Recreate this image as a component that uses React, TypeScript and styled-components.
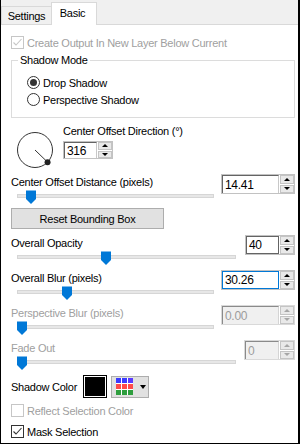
import React from 'react';
import styled, { createGlobalStyle, css } from 'styled-components';

const GlobalStyle = createGlobalStyle`
  html, body {
    margin: 0;
    padding: 0;
    background: #fff;
  }
  * {
    box-sizing: border-box;
  }
`;

type Variant = 'sunken' | 'hover' | 'focus' | 'disabled';

const Frame = styled.div`
  width: 300px;
  height: 444px;
  border-left: 1px solid #000;
  border-right: 2px solid #000;
  border-bottom: 1px solid #000;
  background: #fff;
  display: flex;
  flex-direction: column;
  font-family: 'Liberation Sans', Arial, sans-serif;
  font-size: 11px;
  letter-spacing: -0.25px;
  color: #000;
  overflow: hidden;
`;

const TabStrip = styled.div`
  height: 25px;
  flex: none;
  background: #f0f0f0;
  border-bottom: 1px solid #d9d9d9;
  display: flex;
  align-items: flex-end;
`;

const Tab = styled.div<{ $active?: boolean }>`
  display: flex;
  align-items: center;
  justify-content: center;
  border: 1px solid #d9d9d9;
  border-bottom: none;
  ${(p) =>
    p.$active
      ? css`
          width: 46px;
          height: 23px;
          margin: 0 0 -1px -1px;
          padding: 0 3px 2px 0;
          background: #fff;
          position: relative;
          z-index: 1;
        `
      : css`
          width: 51px;
          height: 18px;
          background: #f0f0f0;
        `}
`;

const Panel = styled.div`
  flex: 1;
  display: flex;
  flex-direction: column;
  padding: 0 3px 0 10px;
`;

const CheckRow = styled.div<{ $disabled?: boolean; $mt: number }>`
  display: flex;
  align-items: center;
  gap: 3px;
  height: 13px;
  margin-top: ${(p) => p.$mt}px;
  color: ${(p) => (p.$disabled ? '#a0a0a0' : '#000')};
`;

const CheckBox = styled.span<{ $disabled?: boolean }>`
  width: 13px;
  height: 13px;
  flex: none;
  display: flex;
  align-items: center;
  justify-content: center;
  background: #fff;
  border: 1px solid ${(p) => (p.$disabled ? '#c6c6c6' : '#333')};
`;

const GroupBox = styled.div`
  margin-top: 11px;
  border: 1px solid #dcdcdc;
  padding: 0 0 9px 15px;
  display: flex;
  flex-direction: column;
`;

const GroupTitle = styled.div`
  width: fit-content;
  margin: -8px 0 7px -9px;
  padding: 0 2px;
  line-height: 14px;
  background: #fff;
`;

const RadioRow = styled.div`
  display: flex;
  align-items: center;
  gap: 3px;
  height: 17px;
`;

const RadioCircle = styled.span<{ $checked?: boolean }>`
  width: 13px;
  height: 13px;
  flex: none;
  border: 1px solid #333;
  border-radius: 50%;
  display: flex;
  align-items: center;
  justify-content: center;
  &::after {
    content: '';
    width: 7px;
    height: 7px;
    border-radius: 50%;
    background: ${(p) => (p.$checked ? '#333' : 'transparent')};
  }
`;

const DialSection = styled.div`
  display: flex;
  align-items: flex-start;
  margin-top: 6px;
  height: 45px;
`;

const Dial = styled.svg`
  flex: none;
  margin: 7px 9px 0 5px;
`;

const DialColumn = styled.div`
  display: flex;
  flex-direction: column;
  gap: 3px;
`;

const Label = styled.div<{ $disabled?: boolean }>`
  line-height: 14px;
  white-space: nowrap;
  color: ${(p) => (p.$disabled ? '#a0a0a0' : '#000')};
`;

const Field = styled.div<{ $mt: number }>`
  display: flex;
  flex-direction: column;
  margin-top: ${(p) => p.$mt}px;
`;

const FieldTop = styled.div`
  display: flex;
  align-items: flex-start;
  justify-content: space-between;
  height: 20px;
  ${Label} {
    margin-top: 1px;
  }
`;

const SpinWrap = styled.div<{ $w: number; $h: number; $disabled?: boolean }>`
  display: flex;
  flex: none;
  width: ${(p) => p.$w}px;
  height: ${(p) => p.$h}px;
  border: 1px solid ${(p) => (p.$disabled ? '#d9d9d9' : '#c2c2c2')};
`;

const SpinInput = styled.div<{ $variant: Variant }>`
  flex: 1;
  display: flex;
  align-items: center;
  padding-left: 2px;
  font-size: 12px;
  letter-spacing: -0.3px;
  background: #fff;
  ${(p) => {
    switch (p.$variant) {
      case 'hover':
        return css`
          border: 1px solid #646464;
        `;
      case 'focus':
        return css`
          border: 1px solid #0078d7;
        `;
      case 'disabled':
        return css`
          background: #f0f0f0;
          color: #9c9c9c;
          border-top: 1px solid #8a8a8a;
          border-left: 1px solid #8a8a8a;
          border-right: 1px solid #d4d4d4;
        `;
      default:
        return css`
          border-top: 1px solid #646464;
          border-left: 1px solid #646464;
          border-right: 1px solid #c8c8c8;
        `;
    }
  }}
`;

const Spinner = styled.div`
  width: 15px;
  flex: none;
  display: flex;
  flex-direction: column;
  gap: 1px;
  padding: 0 0 0 1px;
  background: #fff;
`;

const SpinHalf = styled.div<{ $down?: boolean; $disabled?: boolean }>`
  flex: 1;
  display: flex;
  align-items: center;
  justify-content: center;
  background: #e9e9e9;
  border: 1px solid #c4c4c4;
  &::after {
    content: '';
    border-left: 3px solid transparent;
    border-right: 3px solid transparent;
    ${(p) =>
      p.$down
        ? css`
            border-top: 3px solid ${p.$disabled ? '#a6a6a6' : '#000'};
          `
        : css`
            border-bottom: 3px solid ${p.$disabled ? '#a6a6a6' : '#000'};
          `}
  }
`;

const SliderBox = styled.div<{ $right: number }>`
  position: relative;
  height: 14px;
  margin: -4px ${(p) => p.$right}px 0 0;
`;

const Track = styled.div`
  margin: 4px 0 0 6px;
  height: 4px;
  background: #e7e7e7;
  border: 1px solid #d6d6d6;
`;

const Thumb = styled.svg<{ $x: number }>`
  position: absolute;
  top: 0;
  left: ${(p) => p.$x}px;
`;

const PushButton = styled.div`
  margin-top: 4px;
  width: 153px;
  height: 21px;
  display: flex;
  align-items: center;
  justify-content: center;
  background: #e1e1e1;
  border: 1px solid #adadad;
`;

const ColorRow = styled.div`
  display: flex;
  align-items: center;
  height: 23px;
  margin-top: 5px;
`;

const Swatch = styled.div<{ $color: string }>`
  width: 24px;
  height: 23px;
  margin-left: 6px;
  background: ${(p) => p.$color};
  border: 1px solid #000;
  box-shadow: inset 0 0 0 1px #fff;
`;

const PaletteButton = styled.div`
  width: 38px;
  height: 22px;
  margin-left: 4px;
  display: flex;
  align-items: center;
  gap: 7px;
  padding-left: 4px;
  background: #e1e1e1;
  border: 1px solid #adadad;
`;

const Caret = styled.span`
  border-left: 3.5px solid transparent;
  border-right: 3.5px solid transparent;
  border-top: 4px solid #000;
`;

const Check = ({ disabled }: { disabled?: boolean }) => (
  <svg width="11" height="11" viewBox="0 0 11 11">
    <polyline
      points="1.5,5.5 4,8 9.5,2"
      fill="none"
      stroke={disabled ? '#c6c6c6' : '#333'}
      strokeWidth="1.1"
    />
  </svg>
);

const Spin: React.FC<{ value: string; w: number; h?: number; variant: Variant }> = ({
  value,
  w,
  h = 20,
  variant,
}) => {
  const off = variant === 'disabled';
  return (
    <SpinWrap $w={w} $h={h} $disabled={off}>
      <SpinInput $variant={variant}>{value}</SpinInput>
      <Spinner>
        <SpinHalf $disabled={off} />
        <SpinHalf $down $disabled={off} />
      </Spinner>
    </SpinWrap>
  );
};

const SliderField: React.FC<{
  label: string;
  value: string;
  spinW: number;
  variant: Variant;
  right: number;
  thumb: number;
  mt: number;
}> = ({ label, value, spinW, variant, right, thumb, mt }) => (
  <Field $mt={mt}>
    <FieldTop>
      <Label $disabled={variant === 'disabled'}>{label}</Label>
      <Spin value={value} w={spinW} variant={variant} />
    </FieldTop>
    <SliderBox $right={right}>
      <Track />
      <Thumb $x={thumb} width="10" height="14" viewBox="0 0 10 14">
        <polygon points="0,0.5 10,0.5 10,9 5,14 0,9" fill="#0078d7" />
      </Thumb>
    </SliderBox>
  </Field>
);

const paletteColors = [
  ['#3a3aff', '#3a3aff', '#5a3aff'],
  ['#ff4a4a', '#ff4a4a', '#ff4a4a'],
  ['#2e9e3e', '#2e9e3e', '#2e9e3e'],
];

const App: React.FC = () => {
  // 316 degrees, measured counter-clockwise from the right
  const angle = (316 * Math.PI) / 180;
  const kx = 19 + 18 * Math.cos(angle) * 0.97;
  const ky = 19 - 18 * Math.sin(angle) * 0.97;

  return (
    <>
      <GlobalStyle />
      <Frame>
        <TabStrip>
          <Tab>Settings</Tab>
          <Tab $active>Basic</Tab>
        </TabStrip>
        <Panel>
          <CheckRow $disabled $mt={11}>
            <CheckBox $disabled>
              <Check disabled />
            </CheckBox>
            Create Output In New Layer Below Current
          </CheckRow>

          <GroupBox>
            <GroupTitle>Shadow Mode</GroupTitle>
            <RadioRow>
              <RadioCircle $checked />
              Drop Shadow
            </RadioRow>
            <RadioRow>
              <RadioCircle />
              Perspective Shadow
            </RadioRow>
          </GroupBox>

          <DialSection>
            <Dial width="38" height="38" viewBox="0 0 38 38">
              <circle cx="19" cy="19" r="17.5" fill="none" stroke="#333" strokeWidth="1" />
              <line x1="19" y1="19" x2={kx} y2={ky} stroke="#333" strokeWidth="1" />
              <circle cx={kx} cy={ky} r="3" fill="#222" />
            </Dial>
            <DialColumn>
              <Label>Center Offset Direction (°)</Label>
              <Spin value="316" w={50} h={18} variant="sunken" />
            </DialColumn>
          </DialSection>

          <SliderField
            mt={5}
            label="Center Offset Distance (pixels)"
            value="14.41"
            spinW={74}
            variant="sunken"
            right={81}
            thumb={15}
          />

          <PushButton>Reset Bounding Box</PushButton>

          <SliderField
            mt={6}
            label="Overall Opacity"
            value="40"
            spinW={50}
            variant="hover"
            right={59}
            thumb={90}
          />
          <SliderField
            mt={5}
            label="Overall Blur (pixels)"
            value="30.26"
            spinW={74}
            variant="focus"
            right={81}
            thumb={51}
          />
          <SliderField
            mt={5}
            label="Perspective Blur (pixels)"
            value="0.00"
            spinW={74}
            variant="disabled"
            right={81}
            thumb={6}
          />
          <SliderField
            mt={5}
            label="Fade Out"
            value="0"
            spinW={51}
            variant="disabled"
            right={59}
            thumb={6}
          />

          <ColorRow>
            <Label>Shadow Color</Label>
            <Swatch $color="#000" />
            <PaletteButton>
              <svg width="17" height="17" viewBox="0 0 17 17">
                <rect width="17" height="17" fill="#fff" />
                {paletteColors.map((row, r) =>
                  row.map((c, i) => (
                    <rect key={`${r}-${i}`} x={i * 6} y={r * 6} width="5" height="5" fill={c} />
                  ))
                )}
              </svg>
              <Caret />
            </PaletteButton>
          </ColorRow>

          <CheckRow $disabled $mt={6}>
            <CheckBox $disabled />
            Reflect Selection Color
          </CheckRow>
          <CheckRow $mt={8}>
            <CheckBox>
              <Check />
            </CheckBox>
            Mask Selection
          </CheckRow>
        </Panel>
      </Frame>
    </>
  );
};

export default App;
